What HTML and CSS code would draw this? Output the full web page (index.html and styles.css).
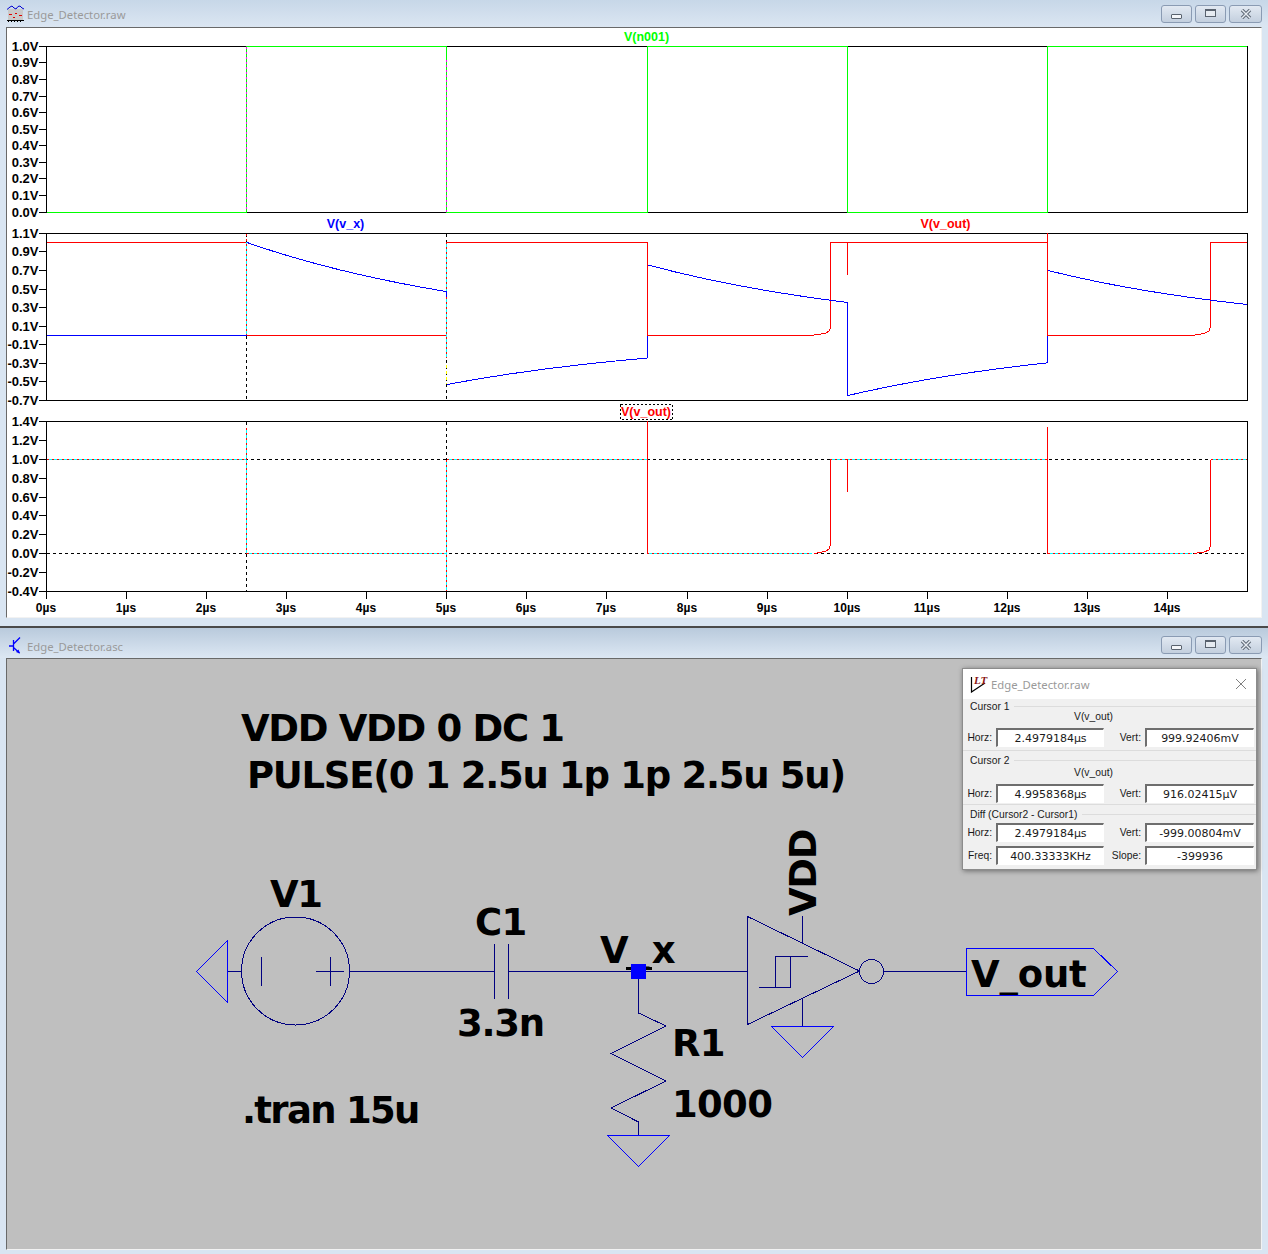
FILE: index.html
```html
<!DOCTYPE html>
<html lang="en">
  <head>
    <meta charset="UTF-8" />
    <meta name="viewport" content="width=device-width, initial-scale=1.0" />
    <title>Edge_Detector</title>
    <link rel="stylesheet" href="styles.css">
  </head>
  <body>
    <!-- Waveform viewer -->
    <div class="win win-plot">
      <div class="titlebar">
        <svg class="app-icon" width="17" height="17" viewBox="0 0 17 17">
          <rect x="1" y="4" width="15" height="11" fill="#c9c9c9" />
          <path class="ico-wave" d="M0 4.5L3 2L5 1L7 3L9 4L11 1.5L13 1L15 3L17 4" />
          <path class="ico-red" d="M2 9.5H5M8 8.5H10M12 10.5H15M6 12.5H8" />
          <path class="ico-axis" d="M0 15.5H17M1.5 15V17M4.5 15V17M7.5 15V17M10.5 15V17M13.5 15V17" />
        </svg>
        <span class="title-text">Edge_Detector.raw</span>
        <div class="win-buttons">
          <button class="win-btn"><span class="ico-min"></span></button>
          <button class="win-btn"><span class="ico-max"></span></button>
          <button class="win-btn">
            <svg width="12" height="10" viewBox="0 0 12 10"><path class="ico-x" d="M2 1L10 9M10 1L2 9" /><path class="ico-x-in" d="M2 1L10 9M10 1L2 9" /></svg>
          </button>
        </div>
      </div>
      <div class="client client-plot">
        <svg class="plot" width="1254" height="589" viewBox="7 28 1254 589">
          <!-- axes -->
          <g class="crisp axis">
            <rect x="46.5" y="46.5" width="1201" height="166" />
            <rect x="46.5" y="233.5" width="1201" height="167" />
            <rect x="46.5" y="421.5" width="1201" height="170" />
            <path d="M39 46.5H46M39 62.5H46M39 79.5H46M39 96.5H46M39 112.5H46M39 129.5H46M39 145.5H46M39 162.5H46M39 178.5H46M39 195.5H46M39 212.5H46" />
            <path d="M39 233.5H46M39 251.5H46M39 270.5H46M39 289.5H46M39 307.5H46M39 326.5H46M39 344.5H46M39 363.5H46M39 381.5H46M39 400.5H46" />
            <path d="M39 421.5H46M39 440.5H46M39 459.5H46M39 478.5H46M39 497.5H46M39 515.5H46M39 534.5H46M39 553.5H46M39 572.5H46M39 591.5H46" />
            <path d="M46.5 591V599M126.5 591V599M206.5 591V599M286.5 591V599M366.5 591V599M446.5 591V599M526.5 591V599M606.5 591V599M687.5 591V599M767.5 591V599M847.5 591V599M927.5 591V599M1007.5 591V599M1087.5 591V599M1167.5 591V599" />
          </g>

          <g class="ylab">
            <text x="38.5" y="51">1.0V</text>
            <text x="38.5" y="67">0.9V</text>
            <text x="38.5" y="84">0.8V</text>
            <text x="38.5" y="101">0.7V</text>
            <text x="38.5" y="117">0.6V</text>
            <text x="38.5" y="134">0.5V</text>
            <text x="38.5" y="150">0.4V</text>
            <text x="38.5" y="167">0.3V</text>
            <text x="38.5" y="183">0.2V</text>
            <text x="38.5" y="200">0.1V</text>
            <text x="38.5" y="217">0.0V</text>
            <text x="38.5" y="238">1.1V</text>
            <text x="38.5" y="256">0.9V</text>
            <text x="38.5" y="275">0.7V</text>
            <text x="38.5" y="294">0.5V</text>
            <text x="38.5" y="312">0.3V</text>
            <text x="38.5" y="331">0.1V</text>
            <text x="38.5" y="349">-0.1V</text>
            <text x="38.5" y="368">-0.3V</text>
            <text x="38.5" y="386">-0.5V</text>
            <text x="38.5" y="405">-0.7V</text>
            <text x="38.5" y="426">1.4V</text>
            <text x="38.5" y="445">1.2V</text>
            <text x="38.5" y="464">1.0V</text>
            <text x="38.5" y="483">0.8V</text>
            <text x="38.5" y="502">0.6V</text>
            <text x="38.5" y="520">0.4V</text>
            <text x="38.5" y="539">0.2V</text>
            <text x="38.5" y="558">0.0V</text>
            <text x="38.5" y="577">-0.2V</text>
            <text x="38.5" y="596">-0.4V</text>
          </g>

          <g class="xlab">
            <text x="46" y="612">0µs</text>
            <text x="126" y="612">1µs</text>
            <text x="206" y="612">2µs</text>
            <text x="286" y="612">3µs</text>
            <text x="366" y="612">4µs</text>
            <text x="446" y="612">5µs</text>
            <text x="526" y="612">6µs</text>
            <text x="606" y="612">7µs</text>
            <text x="687" y="612">8µs</text>
            <text x="767" y="612">9µs</text>
            <text x="847" y="612">10µs</text>
            <text x="927" y="612">11µs</text>
            <text x="1007" y="612">12µs</text>
            <text x="1087" y="612">13µs</text>
            <text x="1167" y="612">14µs</text>
          </g>

          <text class="trace-name t-green" x="646.5" y="41">V(n001)</text>
          <text class="trace-name t-blue" x="345.5" y="228">V(v_x)</text>
          <text class="trace-name t-red" x="945.5" y="228">V(v_out)</text>
          <text class="trace-name t-red" x="646" y="416">V(v_out)</text>
          <rect class="crisp sel-box" x="620.5" y="404.5" width="52" height="15" />

          <!-- cursors -->
          <g class="crisp cursor">
            <path d="M246.5 47V212M446.5 47V212M246.5 234V400M446.5 234V400M246.5 422V591M446.5 422V591" />
            <path d="M47 459.5H1247M47 553.5H1247" />
          </g>

          <!-- top pane: V(n001) -->
          <g class="crisp">
            <path class="tr-green" d="M47 212.5H246.5V46.5H446.5V212.5H647.5V46.5H847.5V212.5H1047.5V46.5H1247" />
            <path class="dash-mag" d="M246.5 47V212M446.5 60V212" />
          </g>

          <!-- middle pane -->
          <g class="crisp">
            <path class="tr-cyan" d="M246.5 242V335M446.5 242V358" />
            <path class="dash-red" d="M246.5 234V335M446.5 242V358" />
            <path class="tr-blue" d="M47 335.5H246.5" />
            <path class="tr-red" d="M47 242.5H246M247 335.5H446M447 242.5H647.5V335.5H810L825 333.5L829 331L830.5 328V242.5H1047.5M847.5 242V275M1047.5 233V335.5H1192L1204 333.5L1209 331L1210.5 327V242.5H1247" />
            <path class="tr-blue" d="M247 242.5Q333 272.7 446 291.5M446.5 291V297" />
            <path class="tr-blue" d="M447 384.5Q534.5 367.9 647.5 358V335.5" />
            <path class="tr-blue" d="M648 265Q734 288.2 847.5 302.5V395.5" />
            <path class="tr-blue" d="M848 395.5Q935 375.1 1046 363L1047.5 362V336" />
            <path class="tr-blue" d="M1048 270.5Q1135 292.2 1247 304.5" />
            <path class="dash-yellow" d="M446.5 365V384" />
          </g>

          <!-- bottom pane: V(v_out) -->
          <g class="crisp">
            <path class="tr-cyan" d="M47 459.5H246M246.5 428V553.5M247 553.5H446M446.5 459.5V591M447 459.5H647M647 553.5H812M830 459.5H1047M1048 553.5H1192M1211 459.5H1247" />
            <path class="dash-red" d="M47 459.5H246M246.5 428V553.5M247 553.5H446M446.5 459.5V591M447 459.5H647M647 553.5H812M830 459.5H1047M1048 553.5H1192M1211 459.5H1247" />
            <path class="tr-red" d="M647.5 421V553.5M814 553.5L825 551.5L829 549L830.5 545V459.5M847.5 459V492M1047.5 427V553.5M1194 553.5L1204 552L1209 550L1210.5 546V459.5" />
          </g>
        </svg>
      </div>
    </div>

    <!-- Schematic -->
    <div class="win win-sch">
      <div class="titlebar titlebar-sch">
        <svg class="app-icon" width="17" height="17" viewBox="0 0 17 17">
          <path class="ico-tran" d="M2 9H6M6.5 3V14M6.5 7L13 0.5M6.5 10.5L12.5 16" />
          <path class="ico-tran-fill" d="M9 15L13 16.5L11.5 12.5Z" />
        </svg>
        <span class="title-text">Edge_Detector.asc</span>
        <div class="win-buttons">
          <button class="win-btn"><span class="ico-min"></span></button>
          <button class="win-btn"><span class="ico-max"></span></button>
          <button class="win-btn">
            <svg width="12" height="10" viewBox="0 0 12 10"><path class="ico-x" d="M2 1L10 9M10 1L2 9" /><path class="ico-x-in" d="M2 1L10 9M10 1L2 9" /></svg>
          </button>
        </div>
      </div>
      <div class="client client-sch">
        <svg class="sch" width="1254" height="590" viewBox="7 659 1254 590">
          <g class="sch-text">
            <text class="tight" x="241" y="741">VDD VDD 0 DC 1</text>
            <text class="tight" x="247" y="788">PULSE(0 1 2.5u 1p 1p 2.5u 5u)</text>
            <text class="tight" x="270" y="907">V1</text>
            <text class="snug" x="475" y="935">C1</text>
            <text class="wide" x="600" y="963">V<tspan dy="-2">_</tspan><tspan dy="2">x</tspan></text>
            <rect x="626" y="967" width="26" height="3" />
            <text class="tight" x="457" y="1036">3.3n</text>
            <text class="tighter" x="242" y="1123">.tran 15u</text>
            <text class="snug" x="672" y="1056">R1</text>
            <text class="snug" x="672" y="1117">1000</text>
            <text class="loose" x="971" y="987">V_out</text>
            <text class="tight" transform="translate(816 916) rotate(-90)">VDD</text>
          </g>

          <g class="crisp wire">
            <path d="M227.5 971.5H241.5M349.5 971.5H494.5M508.5 971.5H747.5M884 971.5H966.5" />
            <circle cx="295.5" cy="971" r="54" />
            <path d="M261.5 957V986M316 971.5H344M330.5 957V986" />
            <path d="M494.5 944V999M508.5 944V999" />
            <path d="M638.5 979V1013L666 1026L611 1053.5L666 1081L611 1108L638.5 1122V1135" />
            <path d="M747.5 916.5V1024.5L859.5 971L747.5 916.5M802.5 916V943M802.5 998V1026" />
            <path d="M759 987.5H790.5V956.5H775.5V987.5M775.5 956.5H808" />
            <circle cx="871.5" cy="971.5" r="12" />
          </g>
          <g class="crisp bright">
            <path d="M227.5 940.5V1002.5L196.5 971.5Z" />
            <path d="M607.5 1135.5H669.5L638.5 1166.5Z" />
            <path d="M771.5 1026.5H833.5L802.5 1057.5Z" />
            <path d="M966.5 948.5H1093.5L1117.5 971.5L1093.5 995.5H966.5Z" />
          </g>
          <rect class="crisp junction" x="631" y="964" width="15" height="15" />
        </svg>

        <!-- Cursor values, floats over the schematic -->
        <div class="dlg">
          <div class="dlg-title">
            <svg class="dlg-icon" width="18" height="18" viewBox="0 0 18 18">
              <path class="ico-tri" d="M1.5 2V17L15 8" />
              <text class="ico-lt" x="4" y="9">LT</text>
            </svg>
            <span class="dlg-name">Edge_Detector.raw</span>
            <svg class="dlg-close" width="12" height="12" viewBox="0 0 12 12"><path d="M1 1L11 11M11 1L1 11" /></svg>
          </div>

          <div class="group">
            <div class="legend"><span>Cursor 1</span></div>
            <div class="trace">V(v_out)</div>
            <div class="row">
              <label>Horz:</label><div class="val">2.4979184µs</div>
              <label>Vert:</label><div class="val">999.92406mV</div>
            </div>
          </div>

          <div class="group group-two">
            <div class="legend"><span>Cursor 2</span></div>
            <div class="trace">V(v_out)</div>
            <div class="row">
              <label>Horz:</label><div class="val">4.9958368µs</div>
              <label>Vert:</label><div class="val">916.02415µV</div>
            </div>
          </div>

          <div class="group group-diff">
            <div class="legend"><span>Diff (Cursor2 - Cursor1)</span></div>
            <div class="row">
              <label>Horz:</label><div class="val">2.4979184µs</div>
              <label>Vert:</label><div class="val">-999.00804mV</div>
            </div>
            <div class="row">
              <label>Freq:</label><div class="val">400.33333KHz</div>
              <label>Slope:</label><div class="val">-399936</div>
            </div>
          </div>
        </div>
      </div>
    </div>
  </body>
</html>
```

FILE: styles.css
```css
html,
body {
  margin: 0;
  height: 1254px;
  overflow: hidden;
}
body {
  background: #d9e5f2;
  font-family: "Liberation Sans", Arial, sans-serif;
}
.win {
  padding: 0 6px;
}
.win-plot {
  height: 626px;
}
.win-sch {
  border-top: 2px solid #4a4a4a;
  height: 626px;
}
.titlebar {
  height: 27px;
  box-sizing: border-box;
  display: flex;
  align-items: center;
  background: linear-gradient(#c7d7e8, #dbe6f2);
  margin: 0 -6px;
  padding: 0 6px 0 7px;
}
.titlebar-sch {
  height: 30px;
  padding-top: 4px;
  background: linear-gradient(#b9cadc, #dce7f3);
}
.app-icon {
  flex: none;
}
.title-text {
  margin-left: 3px;
  padding-top: 2px;
  font-family: "Noto Sans", sans-serif;
  font-size: 11.3px;
  color: #9a9a9a;
}
.win-buttons {
  margin-left: auto;
  display: flex;
  gap: 3px;
}
.win-btn {
  width: 31px;
  height: 18px;
  padding: 0;
  display: flex;
  align-items: center;
  justify-content: center;
  border: 1px solid #8a9bb3;
  border-radius: 3px;
  background: linear-gradient(#e2e9f2, #c3cfde);
}
.win-btn:last-child {
  width: 33px;
}
.ico-min {
  width: 9px;
  height: 3px;
  margin-top: 5px;
  background: #f4f6f9;
  border: 1px solid #59626e;
  border-radius: 1px;
}
.ico-max {
  width: 9px;
  height: 5px;
  margin-bottom: 2px;
  background: #e6ebf1;
  border: 1px solid #59626e;
  border-top-width: 2px;
}
.ico-x {
  fill: none;
  stroke: #5f6976;
  stroke-width: 3.4;
}
.ico-x-in {
  fill: none;
  stroke: #e8edf3;
  stroke-width: 1.4;
}
.client {
  box-sizing: border-box;
  border: 1px solid #f2f2f2;
  border-top-color: #696969;
  border-left-color: #696969;
}
.client-plot {
  height: 591px;
  background: #fff;
}
.client-sch {
  position: relative;
  height: 592px;
  background: #bfbfbf;
}
.client svg.plot,
.client svg.sch {
  display: block;
}
.crisp {
  shape-rendering: crispEdges;
}
.axis {
  fill: none;
  stroke: #000;
  stroke-width: 1;
}
.ylab text {
  font-size: 13px;
  font-weight: bold;
  text-anchor: end;
}
.xlab text {
  font-size: 12px;
  font-weight: bold;
  text-anchor: middle;
}
.trace-name {
  font-size: 12.5px;
  font-weight: bold;
  text-anchor: middle;
}
.t-green {
  fill: #00ff00;
}
.t-blue {
  fill: #0000ff;
}
.t-red {
  fill: #ff0000;
}
.sel-box {
  fill: none;
  stroke: #000;
  stroke-dasharray: 2 2;
}
.cursor {
  fill: none;
  stroke: #000;
  stroke-dasharray: 3 3;
}
.tr-green,
.tr-blue,
.tr-red,
.tr-cyan,
.dash-red,
.dash-mag,
.dash-yellow {
  fill: none;
  stroke-width: 1;
}
.tr-green {
  stroke: #00ff00;
}
.tr-blue {
  stroke: #0000ff;
}
.tr-red {
  stroke: #ff0000;
}
.tr-cyan {
  stroke: #00ffff;
}
.dash-red {
  stroke: #ff0000;
  stroke-dasharray: 2 3;
}
.dash-mag {
  stroke: #ff00ff;
  stroke-dasharray: 2 3;
}
.dash-yellow {
  stroke: #ffff00;
  stroke-dasharray: 3 3;
}
.sch-text text {
  font-family: "DejaVu Sans", sans-serif;
  font-size: 37px;
  font-weight: bold;
  fill: #000;
}
.sch-text .snug {
  letter-spacing: -0.7px;
}
.sch-text .tight {
  letter-spacing: -1.3px;
}
.sch-text .tighter {
  letter-spacing: -1.7px;
}
.sch-text .wide {
  letter-spacing: 2.3px;
}
.sch-text .loose {
  letter-spacing: -0.2px;
}
.wire {
  fill: none;
  stroke: #000080;
  stroke-width: 1;
}
.bright {
  fill: none;
  stroke: #0000ff;
  stroke-width: 1;
}
.junction {
  fill: #0000ff;
}
.ico-wave {
  fill: none;
  stroke: #0000d0;
}
.ico-red {
  fill: none;
  stroke: #e00000;
}
.ico-axis {
  fill: none;
  stroke: #000;
}
.ico-tran {
  fill: none;
  stroke: #0000ff;
  stroke-width: 1.3;
}
.ico-tran-fill {
  fill: #0000ff;
}
.dlg {
  position: absolute;
  left: 955px;
  top: 9px;
  width: 295px;
  box-sizing: border-box;
  height: 202px;
  background: #f0f0f0;
  border: 1px solid #8c8c8c;
  box-shadow: 1px 1px 5px rgba(0, 0, 0, 0.45);
  color: #1a1a1a;
  font-size: 10.3px;
}
.dlg-title {
  height: 30px;
  display: flex;
  align-items: center;
  background: #fff;
  padding: 0 9px 0 7px;
}
.dlg-icon {
  flex: none;
}
.ico-tri {
  fill: #fff;
  stroke: #000;
  stroke-width: 1.2;
}
.ico-lt {
  font-family: "Liberation Serif", serif;
  font-size: 11px;
  font-weight: bold;
  font-style: italic;
  fill: #8a1414;
}
.dlg-name {
  margin-left: 3px;
  font-family: "Noto Sans", sans-serif;
  font-size: 11.3px;
  color: #9a9a9a;
}
.dlg-close {
  margin-left: auto;
  fill: none;
  stroke: #808080;
}
.group {
  padding-top: 1px;
  height: 52px;
  box-sizing: border-box;
  border-bottom: 1px solid #dcdcdc;
}
.group-two {
  padding-top: 3px;
  height: 54px;
}
.group-diff {
  padding-top: 3px;
  height: 65px;
  border-bottom: 0;
}
.legend {
  height: 13px;
  display: flex;
  align-items: center;
  padding-left: 7px;
  line-height: 13px;
}
.legend::after {
  content: "";
  flex: 1;
  margin-left: 5px;
  border-top: 1px solid #dcdcdc;
}
.group-diff .legend {
  margin-bottom: 2px;
}
.trace {
  height: 15px;
  line-height: 8px;
  text-align: center;
  padding-right: 32px;
}
.group-two .trace {
  height: 17px;
  line-height: 12px;
}
.row {
  display: grid;
  grid-template-columns: 29px 112px 37px 113px;
  margin-bottom: 3px;
}
.row label {
  line-height: 20px;
  text-align: right;
  white-space: nowrap;
}
.val {
  margin-left: 4px;
  height: 19px;
  box-sizing: border-box;
  background: #fff;
  border: 1px solid #fff;
  border-top: 2px solid #6e6e6e;
  border-left: 2px solid #6e6e6e;
  font-family: "DejaVu Sans", sans-serif;
  font-size: 11px;
  line-height: 17px;
  text-align: center;
  white-space: nowrap;
}
```
